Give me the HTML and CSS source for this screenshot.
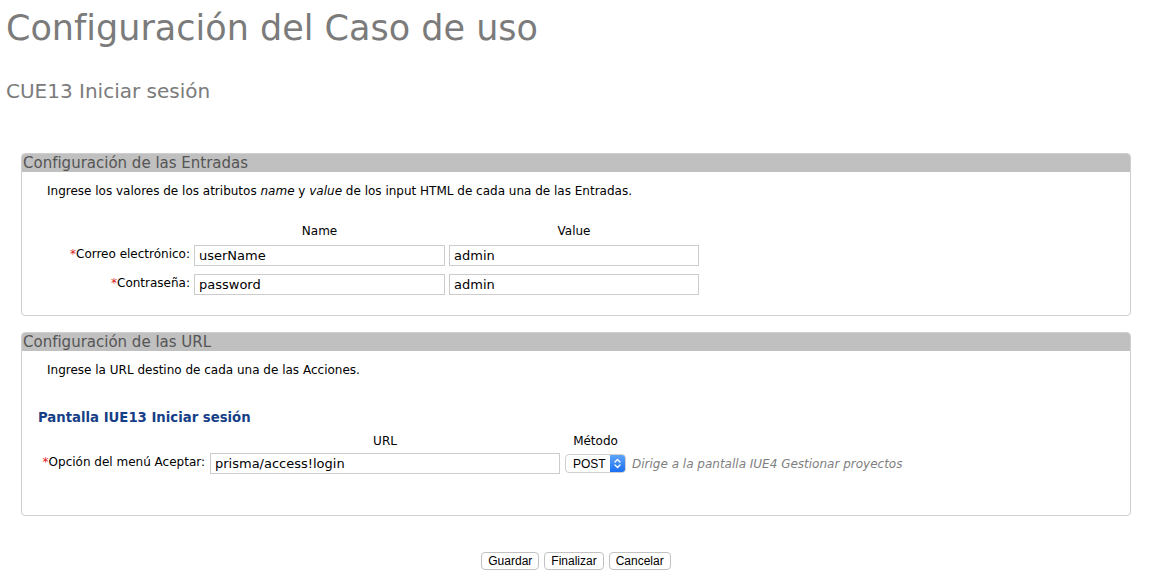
FILE: index.html
```html
<!DOCTYPE html>
<html lang="es">
<head>
<meta charset="utf-8">
<title>Configuración del Caso de uso</title>
<link rel="stylesheet" href="styles.css">
</head>
<body>
<div class="page">
  <h1 class="title">Configuración del Caso de uso</h1>
  <h2 class="subtitle">CUE13 Iniciar sesión</h2>

  <div class="panels">
    <section class="panel panel-inputs">
      <div class="panel-head">Configuración de las Entradas</div>
      <p class="intro">Ingrese los valores de los atributos <em>name</em> y <em>value</em> de los input HTML de cada una de las Entradas.</p>
      <div class="grid-inputs">
        <span></span>
        <span class="col-head">Name</span>
        <span class="col-head">Value</span>

        <label class="lbl"><span class="req">*</span>Correo electrónico:</label>
        <span class="field">userName</span>
        <span class="field">admin</span>

        <label class="lbl"><span class="req">*</span>Contraseña:</label>
        <span class="field">password</span>
        <span class="field">admin</span>
      </div>
    </section>

    <section class="panel panel-urls">
      <div class="panel-head">Configuración de las URL</div>
      <p class="intro">Ingrese la URL destino de cada una de las Acciones.</p>
      <h3 class="screen-title">Pantalla IUE13 Iniciar sesión</h3>
      <div class="grid-urls">
        <span></span>
        <span class="col-head">URL</span>
        <span class="col-head method-head">Método</span>
        <span></span>

        <label class="lbl"><span class="req">*</span>Opción del menú Aceptar:</label>
        <span class="field">prisma/access!login</span>
        <span class="select">
          <span class="select-text">POST</span>
          <span class="select-btn">
            <svg width="11" height="13" viewBox="0 0 11 13"><path d="M3 5 L5.5 2.5 L8 5 M3 8 L5.5 10.5 L8 8" fill="none" stroke="#fff" stroke-width="1.4" stroke-linecap="round" stroke-linejoin="round"/></svg>
          </span>
        </span>
        <span class="hint">Dirige a la pantalla IUE4 Gestionar proyectos</span>
      </div>
    </section>
  </div>

  <div class="actions">
    <button class="btn" type="button">Guardar</button>
    <button class="btn" type="button">Finalizar</button>
    <button class="btn" type="button">Cancelar</button>
  </div>
</div>
</body>
</html>
```

FILE: styles.css
```css
html, body {
  margin: 0;
  padding: 0;
  background: #fff;
}

body {
  font-family: "DejaVu Sans", Verdana, sans-serif;
  color: #000;
  font-size: 12px;
}

.page {
  padding: 0 23px 0 6px;
}

.title {
  margin: 6px 0 0 0;
  font-size: 35px;
  line-height: 44px;
  font-weight: normal;
  color: #7b7b7b;
}

.subtitle {
  margin: 29px 0 0 0;
  font-size: 20px;
  line-height: 24px;
  font-weight: normal;
  color: #7b7b7b;
}

.panels {
  margin-top: 50px;
  padding-left: 15px;
  display: flex;
  flex-direction: column;
  gap: 16px;
}

.panel {
  border: 1px solid #cfcfcf;
  border-radius: 4px;
  overflow: hidden;
}

.panel-head {
  background: #c0c0c0;
  color: #555;
  font-size: 15px;
  line-height: 18px;
  padding-left: 1px;
}

.intro {
  margin: 12px 0 0 25px;
  font-size: 12px;
  line-height: 15px;
}

.intro em {
  font-style: italic;
}

.panel-inputs {
  height: 161px;
}

.panel-urls {
  height: 182px;
}

.grid-inputs {
  margin-top: 25px;
  display: grid;
  grid-template-columns: 168px 251px 250px;
  column-gap: 4px;
  row-gap: 8px;
  align-items: center;
}

.col-head {
  text-align: center;
  line-height: 15px;
  margin-bottom: -2px;
}

.lbl {
  text-align: right;
  line-height: 15px;
  margin-top: -3px;
}

.req {
  color: #e0201a;
}

.field {
  display: block;
  box-sizing: border-box;
  height: 21px;
  border: 1px solid #cccccc;
  padding: 0 4px;
  line-height: 19px;
  font-size: 13px;
  background: #fff;
}

.screen-title {
  margin: 31px 0 0 16px;
  font-size: 13.25px;
  line-height: 17px;
  font-weight: bold;
  color: #173f88;
}

.grid-urls {
  margin-top: 8px;
  display: grid;
  grid-template-columns: 183px 350px 61px auto;
  column-gap: 5px;
  row-gap: 6px;
  align-items: center;
  justify-items: start;
}

.grid-urls .col-head {
  justify-self: stretch;
}

.grid-urls .lbl {
  justify-self: end;
}

.grid-urls .field {
  width: 100%;
}

.method-head {
  white-space: nowrap;
  text-align: center;
}

.select {
  box-sizing: border-box;
  display: flex;
  align-items: center;
  justify-content: space-between;
  width: 61px;
  height: 19px;
  border: 1px solid #cfcfcf;
  border-radius: 4px;
  padding-left: 7px;
  font-family: "Liberation Sans", Arial, sans-serif;
  font-size: 12px;
  background: #fff;
}

.select-btn {
  display: flex;
  align-items: center;
  justify-content: center;
  width: 15px;
  height: 17px;
  background: linear-gradient(#5ea5f8, #1b6ff2);
  border-radius: 0 3px 3px 0;
}

.hint {
  font-style: italic;
  color: #808080;
  font-size: 12px;
  margin-left: 1px;
}

.actions {
  margin-top: 36px;
  display: flex;
  justify-content: center;
  gap: 5px;
  padding-left: 15px;
}

.btn {
  font-family: "Liberation Sans", Arial, sans-serif;
  font-size: 12px;
  color: #000;
  height: 18px;
  line-height: 16px;
  padding: 0 6px;
  background: #fff;
  border: 1px solid #c2c2c2;
  border-radius: 4px;
}
```
